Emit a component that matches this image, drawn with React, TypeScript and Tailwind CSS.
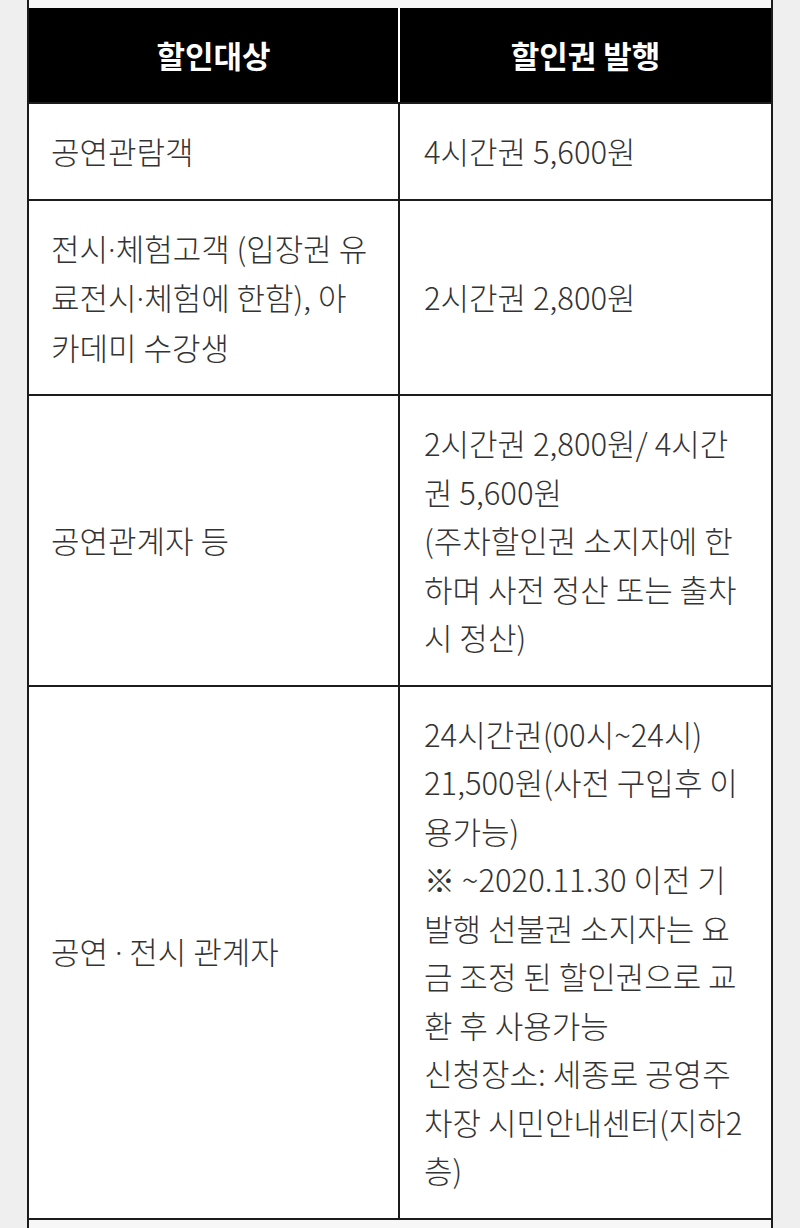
import React from 'react';

type Row = { target: string[]; ticket: string[] };

const rows: Row[] = [
  { target: ['공연관람객'], ticket: ['4시간권 5,600원'] },
  {
    target: ['전시·체험고객 (입장권 유', '료전시·체험에 한함), 아', '카데미 수강생'],
    ticket: ['2시간권 2,800원'],
  },
  {
    target: ['공연관계자 등'],
    ticket: [
      '2시간권 2,800원/ 4시간',
      '권 5,600원',
      '(주차할인권 소지자에 한',
      '하며 사전 정산 또는 출차',
      '시 정산)',
    ],
  },
  {
    target: ['공연 · 전시 관계자'],
    ticket: [
      '24시간권(00시~24시)',
      '21,500원(사전 구입후 이',
      '용가능)',
      '※ ~2020.11.30 이전 기',
      '발행 선불권 소지자는 요',
      '금 조정 된 할인권으로 교',
      '환 후 사용가능',
      '신청장소: 세종로 공영주',
      '차장 시민안내센터(지하2',
      '층)',
    ],
  },
];

// the CJK font draws "·" full width; take the narrow one from Noto Sans
const Line: React.FC<{ text: string }> = ({ text }) => {
  const parts = text.split('·');
  return (
    <div className="whitespace-nowrap">
      {parts.map((p, i) => (
        <React.Fragment key={i}>
          {i > 0 && <span className="font-['Noto_Sans',sans-serif]">·</span>}
          {p}
        </React.Fragment>
      ))}
    </div>
  );
};

const Lines: React.FC<{ lines: string[] }> = ({ lines }) => (
  <div>
    {lines.map((l, i) => (
      <Line key={i} text={l} />
    ))}
  </div>
);

export default function App() {
  return (
    <div className="min-h-screen bg-[#efefef] px-[27px] font-['Noto_Sans_CJK_KR','Noto_Sans',sans-serif]">
      <div className="border-x-2 border-[#1c1c1c] bg-white">
        {/* strip left over from the block above */}
        <div className="h-[8px] bg-[#f7f7f7]" />

        {/* header */}
        <div className="flex h-[96px] border-b-2 border-[#1c1c1c] text-[31px] font-bold text-white">
          <div className="flex w-1/2 items-center justify-center border-r-2 border-white bg-black">
            할인대상
          </div>
          <div className="flex w-1/2 items-center justify-center bg-black">할인권 발행</div>
        </div>

        {/* body */}
        {rows.map((row, i) => (
          <div
            key={i}
            className="flex border-b-2 border-[#1c1c1c] text-[31px] font-light leading-[48.5px] text-[#333]"
          >
            <div className="flex w-1/2 items-center border-r-2 border-[#1c1c1c] px-[22px] py-[23px]">
              <Lines lines={row.target} />
            </div>
            <div className="flex w-1/2 items-center px-[24px] py-[23px]">
              <Lines lines={row.ticket} />
            </div>
          </div>
        ))}

        <div className="h-[12px] bg-[#f7f7f7]" />
      </div>
    </div>
  );
}
